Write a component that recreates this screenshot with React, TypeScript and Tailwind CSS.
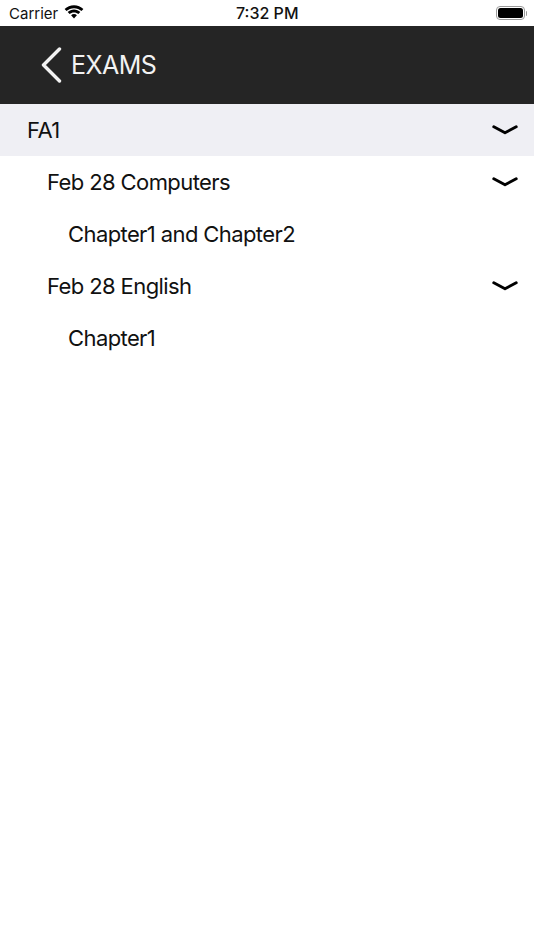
const Chevron = () => (
  <svg width="26" height="10" viewBox="0 0 26 10" className="absolute right-[16px] top-1/2 -translate-y-1/2" fill="none">
    <path d="M1.800 1.800 L13 7.700 L24.200 1.800" stroke="#000" strokeWidth="2.900" strokeLinecap="round" strokeLinejoin="round" />
  </svg>
);

const Row = ({ label, pad, bg, chevron }: { label: string; pad: string; bg?: string; chevron?: boolean }) => (
  <div className={`relative flex h-[52px] items-center ${pad} ${bg ?? ""}`}>
    <span className="text-[22px] leading-none tracking-[-0.6px] text-[#111]">{label}</span>
    {chevron && <Chevron />}
  </div>
);

export default function App() {
  return (
    <div className="flex h-[950px] w-[534px] flex-col bg-white font-['Inter','Liberation_Sans',sans-serif]">
      <div className="relative flex h-[26px] items-center justify-between pl-[9px] pr-[7px]">
        <div className="flex items-center gap-[6px]">
          <span className="text-[15px] leading-none text-[#111]">Carrier</span>
          <svg width="20" height="15" viewBox="0 0 20 15" fill="#000" className="-mt-[1px]">
            <path d="M10 3.200c2.900 0 5.500 1.100 7.500 2.900l1.900-2C16.900 1.700 13.600.2 10 .2S3.100 1.700.6 4.100l1.900 2c2-1.800 4.600-2.900 7.500-2.900z" />
            <path d="M10 7.400c1.700 0 3.200.6 4.400 1.700l1.900-2C14.600 5.600 12.400 4.600 10 4.600S5.400 5.600 3.700 7.100l1.900 2C6.800 8 8.300 7.400 10 7.400z" />
            <path d="M10 9.100c-1.100 0-2.100.4-2.900 1.100l2.900 3.300 2.900-3.300C12.100 9.500 11.100 9.100 10 9.100z" />
          </svg>
        </div>
        <span className="absolute left-[236px] text-[16px] font-medium leading-none text-[#111]">7:32 PM</span>
        <div className="flex items-center gap-[1px]">
          <div className="flex h-[14px] w-[29px] items-center justify-center rounded-[4px] border border-[#9a9a9a]">
            <div className="h-[10px] w-[25px] rounded-[2.5px] bg-black" />
          </div>
          <div className="h-[5px] w-[1.5px] rounded-r-sm bg-[#9a9a9a]" />
        </div>
      </div>
      <div className="flex h-[78px] items-center bg-[#252525] pl-[41px]">
        <svg width="21" height="36" viewBox="0 0 21 36" fill="none">
          <path d="M18.500 2 L2.500 18 L18.500 34" stroke="#f2f2f2" strokeWidth="3.400" strokeLinecap="round" strokeLinejoin="round" />
        </svg>
        <span className="ml-[9px] text-[25px] leading-none tracking-[-0.55px] text-[#f2f2f2]">EXAMS</span>
      </div>
      <Row label="FA1" pad="pl-[27px]" bg="bg-[#efeff4]" chevron />
      <Row label="Feb 28 Computers" pad="pl-[47px]" chevron />
      <Row label="Chapter1 and Chapter2" pad="pl-[68px]" />
      <Row label="Feb 28 English" pad="pl-[47px]" chevron />
      <Row label="Chapter1" pad="pl-[68px]" />
    </div>
  );
}
